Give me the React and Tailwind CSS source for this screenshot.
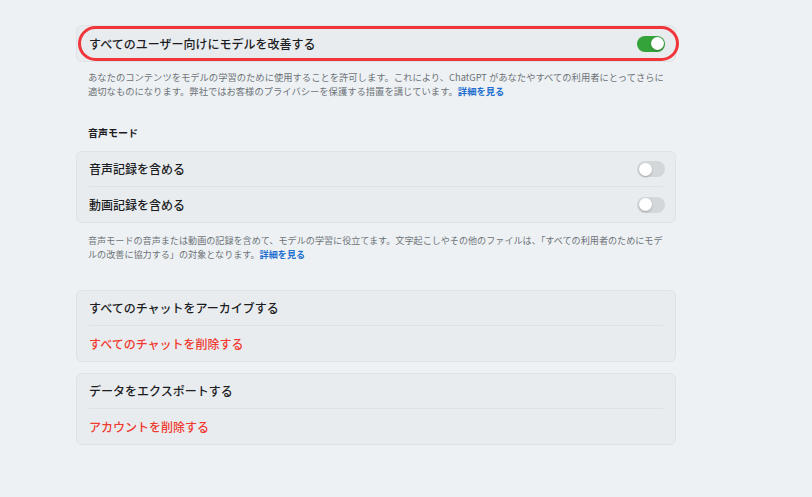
import React, { useState } from 'react';

const Toggle = ({ on, onChange }) => (
  <button
    type="button"
    onClick={onChange}
    className={`relative w-[28px] h-[16px] mr-[-2px] rounded-full shrink-0 transition-colors ${on ? 'bg-[#34a33a]' : 'bg-[#d3d7da]'}`}
  >
    <span
      className={`absolute top-[1.5px] w-[13px] h-[13px] rounded-full bg-white shadow-[0_1px_2px_rgba(0,0,0,0.25)] transition-all ${on ? 'left-[13.5px]' : 'left-[1.5px]'}`}
    />
  </button>
);

const Row = ({ children, last }) => (
  <div className={`h-[35px] flex items-center justify-between ${last ? '' : 'border-b border-[#dde2e5]'}`}>
    {children}
  </div>
);

const Link = ({ children }) => (
  <a href="#" className="text-[#1f6fd0] font-semibold">{children}</a>
);

export default function App() {
  const [improve, setImprove] = useState(true);
  const [audio, setAudio] = useState(false);
  const [video, setVideo] = useState(false);

  return (
    <div
      className="w-[812px] h-[497px] bg-[#edf1f4] text-[#1d1d1f] overflow-hidden"
      style={{ fontFamily: '"Noto Sans CJK JP", "Noto Sans", sans-serif' }}
    >
      <div className="w-[600px] ml-[76px] pt-[25px]">
        {/* モデル改善 */}
        <div className="relative bg-[#e8ecef] border border-[#dfe3e6] rounded-md px-3">
          <Row last>
            <span className="text-[12px] font-medium">すべてのユーザー向けにモデルを改善する</span>
            <Toggle on={improve} onChange={() => setImprove(!improve)} />
          </Row>
          <div className="absolute top-[0px] bottom-[0px] left-[1px] right-[-4px] rounded-full border-[3.5px] border-[#f0363a] pointer-events-none" />
        </div>
        <p className="mt-[8px] px-3 text-[9.3px] leading-[14px] text-[#6e7378]">
          あなたのコンテンツをモデルの学習のために使用することを許可します。これにより、ChatGPT があなたやすべての利用者にとってさらに適切なものになります。弊社ではお客様のプライバシーを保護する措置を講じています。<Link>詳細を見る</Link>
        </p>

        {/* 音声モード */}
        <div className="mt-[28px] px-3 text-[10px] leading-[14px] font-semibold">音声モード</div>
        <div className="mt-[11px] bg-[#e8ecef] border border-[#dfe3e6] rounded-md px-3">
          <Row>
            <span className="text-[12px] font-medium">音声記録を含める</span>
            <Toggle on={audio} onChange={() => setAudio(!audio)} />
          </Row>
          <Row last>
            <span className="text-[12px] font-medium">動画記録を含める</span>
            <Toggle on={video} onChange={() => setVideo(!video)} />
          </Row>
        </div>
        <p className="mt-[10px] px-3 text-[9.1px] leading-[14px] text-[#6e7378]">
          音声モードの音声または動画の記録を含めて、モデルの学習に役立てます。文字起こしやその他のファイルは、「すべての利用者のためにモデルの改善に協力する」の対象となります。<Link>詳細を見る</Link>
        </p>

        {/* チャット */}
        <div className="mt-[29px] bg-[#e8ecef] border border-[#dfe3e6] rounded-md px-3">
          <Row>
            <span className="text-[12px] font-medium">すべてのチャットをアーカイブする</span>
          </Row>
          <Row last>
            <span className="text-[12px] font-medium text-[#f03a2f]">すべてのチャットを削除する</span>
          </Row>
        </div>

        {/* データ */}
        <div className="mt-[11px] bg-[#e8ecef] border border-[#dfe3e6] rounded-md px-3">
          <Row>
            <span className="text-[12px] font-medium">データをエクスポートする</span>
          </Row>
          <Row last>
            <span className="text-[12px] font-medium text-[#f03a2f]">アカウントを削除する</span>
          </Row>
        </div>
      </div>
    </div>
  );
}
